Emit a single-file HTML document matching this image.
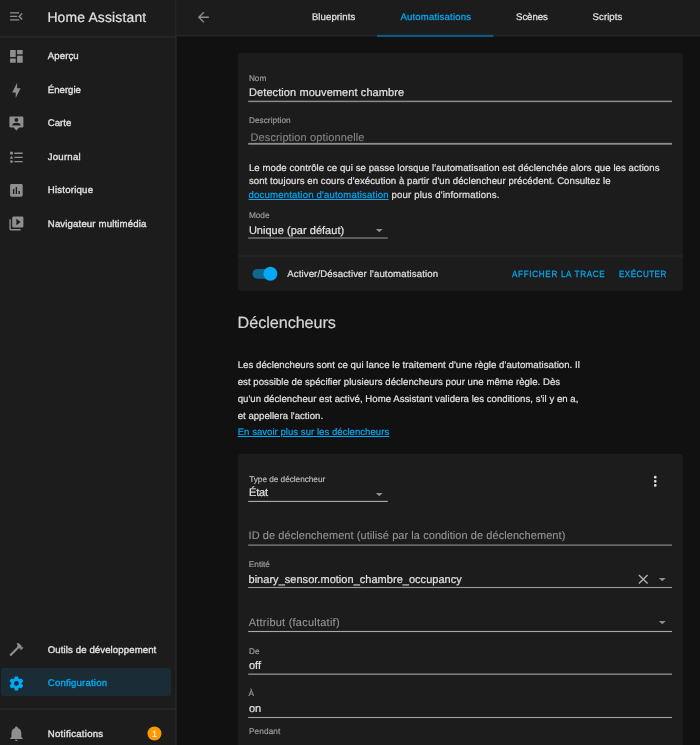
<!DOCTYPE html>
<html lang="fr">
<head>
<meta charset="utf-8">
<title>Home Assistant – Automatisations</title>
<style>
html,body{margin:0;padding:0;background:#111111;}
body{width:700px;height:745px;overflow:hidden;position:relative;font-family:"Liberation Sans", sans-serif;-webkit-font-smoothing:antialiased;}
.b{position:absolute;}
.ic{position:absolute;display:block;overflow:visible;}
.fl{left:0;top:0;width:700px;height:745px;}
.t{position:absolute;white-space:nowrap;margin:0;padding:0;line-height:1;font-weight:400;}
a{color:inherit;text-decoration:underline;text-underline-offset:1px;text-decoration-thickness:0.9px;}
#root{position:absolute;left:0;top:0;width:700px;height:745px;will-change:transform;text-rendering:geometricPrecision;}
</style>
</head>
<body>
<div id="root">
<nav aria-label="Barre latérale">
<div class="b" style="left:0px;top:0px;width:176px;height:745px;background:#1c1c1c;"></div>
<svg class="ic fl" viewBox="0 0 700 745"><rect x="175.4" y="0.00" width="1.20" height="745" fill="#2a2a2a"/></svg>
<svg class="ic fl" viewBox="0 0 700 745"><rect x="0" y="36.35" width="175.40" height="1.1" fill="#2e2e2e"/></svg>
<svg class="ic" style="left:8.10px;top:8.20px;width:16.8px;height:16.8px;" viewBox="0 0 24 24"><path fill="#8f8f8f" d="M21,15.61L19.59,17L14.58,12L19.59,7L21,8.39L17.44,12L21,15.61M3,6H16V8H3V6M3,13V11H13V13H3M3,18V16H16V18H3Z"/></svg>
<svg class="ic" style="left:8.20px;top:48.00px;width:16.8px;height:16.8px;" viewBox="0 0 24 24"><path fill="#8f8f8f" d="M13,3V9H21V3M13,21H21V11H13M3,21H11V15H3M3,13H11V3H3V13Z"/></svg>
<svg class="ic" style="left:8.20px;top:81.60px;width:16.8px;height:16.8px;" viewBox="0 0 24 24"><path fill="#8f8f8f" d="M11,15H6L13,1V9H18L11,23V15Z"/></svg>
<svg class="ic" style="left:8.20px;top:115.40px;width:16.8px;height:16.8px;" viewBox="0 0 24 24"><path fill="#8f8f8f" d="M20,2H4A2,2 0 0,0 2,4V16A2,2 0 0,0 4,18H8L12,22L16,18H20A2,2 0 0,0 22,16V4A2,2 0 0,0 20,2M12,4.3C13.5,4.3 14.7,5.5 14.7,7C14.7,8.5 13.5,9.7 12,9.7C10.5,9.7 9.3,8.5 9.3,7C9.3,5.5 10.5,4.3 12,4.3M18,15H6V14.1C6,12.1 10,11 12,11C14,11 18,12.1 18,14.1V15Z"/></svg>
<svg class="ic" style="left:8.20px;top:148.90px;width:16.8px;height:16.8px;" viewBox="0 0 24 24"><path fill="#8f8f8f" d="M5,9.5L7.5,14H2.5L5,9.5M3,4H7V8H3V4M5,20A2,2 0 0,0 7,18A2,2 0 0,0 5,16A2,2 0 0,0 3,18A2,2 0 0,0 5,20M9,5V7H21V5H9M9,19H21V17H9V19M9,13H21V11H9V13Z"/></svg>
<svg class="ic" style="left:8.20px;top:181.70px;width:16.8px;height:16.8px;" viewBox="0 0 24 24"><path fill="#8f8f8f" d="M17,17H15V13H17M13,17H11V7H13M9,17H7V10H9M19,3H5C3.89,3 3,3.89 3,5V19A2,2 0 0,0 5,21H19A2,2 0 0,0 21,19V5C21,3.89 20.1,3 19,3Z"/></svg>
<svg class="ic" style="left:8.20px;top:215.00px;width:16.8px;height:16.8px;" viewBox="0 0 24 24"><path fill="#8f8f8f" d="M4,6H2V20A2,2 0 0,0 4,22H18V20H4V6M20,2H8A2,2 0 0,0 6,4V16A2,2 0 0,0 8,18H20A2,2 0 0,0 22,16V4A2,2 0 0,0 20,2M12,14.5V5.5L18,10L12,14.5Z"/></svg>
<svg class="ic" style="left:8.20px;top:641.00px;width:16.8px;height:16.8px;" viewBox="0 0 24 24"><path fill="#8f8f8f" d="M2,19.63L13.43,8.2L12.72,7.5L14.14,6.07L12,3.89C13.2,2.7 15.09,2.7 16.27,3.89L19.87,7.5L18.45,8.91H21.29L22,9.62L18.45,13.21L17.74,12.5V9.62L16.27,11.04L15.56,10.33L4.13,21.76L2,19.63Z"/></svg>
<div class="b" style="left:1px;top:668px;width:170px;height:28px;background:#1a2c35;border-radius:3px;"></div>
<svg class="ic" style="left:8.20px;top:674.60px;width:16.8px;height:16.8px;" viewBox="0 0 24 24"><path fill="#03a9f4" d="M12,15.5A3.5,3.5 0 0,1 8.5,12A3.5,3.5 0 0,1 12,8.5A3.5,3.5 0 0,1 15.5,12A3.5,3.5 0 0,1 12,15.5M19.43,12.97C19.47,12.65 19.5,12.33 19.5,12C19.5,11.67 19.47,11.34 19.43,11L21.54,9.37C21.73,9.22 21.78,8.95 21.66,8.73L19.66,5.27C19.54,5.05 19.27,4.96 19.05,5.05L16.56,6.05C16.04,5.66 15.5,5.32 14.87,5.07L14.5,2.42C14.46,2.18 14.25,2 14,2H10C9.75,2 9.54,2.18 9.5,2.42L9.13,5.07C8.5,5.32 7.96,5.66 7.44,6.05L4.95,5.05C4.73,4.96 4.46,5.05 4.34,5.27L2.34,8.73C2.21,8.95 2.27,9.22 2.46,9.37L4.57,11C4.53,11.34 4.5,11.67 4.5,12C4.5,12.33 4.53,12.65 4.57,12.97L2.46,14.63C2.27,14.78 2.21,15.05 2.34,15.27L4.34,18.73C4.46,18.95 4.73,19.03 4.95,18.95L7.44,17.94C7.96,18.34 8.5,18.68 9.13,18.93L9.5,21.58C9.54,21.82 9.75,22 10,22H14C14.25,22 14.46,21.82 14.5,21.58L14.87,18.93C15.5,18.67 16.04,18.34 16.56,17.94L19.05,18.95C19.27,19.03 19.54,18.95 19.66,18.73L21.66,15.27C21.78,15.05 21.73,14.78 21.54,14.63L19.43,12.97Z"/></svg>
<svg class="ic fl" viewBox="0 0 700 745"><rect x="0" y="708.45" width="175.40" height="1.1" fill="#2e2e2e"/></svg>
<svg class="ic" style="left:8.30px;top:725.00px;width:16.8px;height:16.8px;" viewBox="0 0 24 24"><path fill="#8f8f8f" d="M21,19V20H3V19L5,17V11C5,7.9 7.03,5.17 10,4.29C10,4.19 10,4.1 10,4A2,2 0 0,1 12,2A2,2 0 0,1 14,4C14,4.1 14,4.19 14,4.29C16.97,5.17 19,7.9 19,11V17L21,19M14,21A2,2 0 0,1 12,23A2,2 0 0,1 10,21"/></svg>
<svg class="ic fl" viewBox="0 0 700 745"><circle cx="154.45" cy="733.55" r="7.0" fill="#ff9800"/></svg>
<div class="t" id="title" style="left:47.40px;top:11.01px;font-size:13.9px;color:#e1e1e1;letter-spacing:0.177px;-webkit-text-stroke:0.2px #e1e1e1;">Home Assistant</div>
<div class="t" id="sb0" style="left:47.80px;top:52.02px;font-size:9.6px;color:#e1e1e1;letter-spacing:0.099px;-webkit-text-stroke:0.35px #e1e1e1;">Aperçu</div>
<div class="t" id="sb1" style="left:47.80px;top:86.01px;font-size:9.6px;color:#e1e1e1;letter-spacing:0.003px;-webkit-text-stroke:0.35px #e1e1e1;">Énergie</div>
<div class="t" id="sb2" style="left:47.80px;top:119.01px;font-size:9.6px;color:#e1e1e1;letter-spacing:0.006px;-webkit-text-stroke:0.35px #e1e1e1;">Carte</div>
<div class="t" id="sb3" style="left:47.80px;top:153.02px;font-size:9.6px;color:#e1e1e1;letter-spacing:0.219px;-webkit-text-stroke:0.35px #e1e1e1;">Journal</div>
<div class="t" id="sb4" style="left:47.80px;top:186.01px;font-size:9.6px;color:#e1e1e1;letter-spacing:0.220px;-webkit-text-stroke:0.35px #e1e1e1;">Historique</div>
<div class="t" id="sb5" style="left:47.80px;top:220.01px;font-size:9.6px;color:#e1e1e1;letter-spacing:0.150px;-webkit-text-stroke:0.35px #e1e1e1;">Navigateur multimédia</div>
<div class="t" id="sbdev" style="left:47.80px;top:646.02px;font-size:9.6px;color:#e1e1e1;letter-spacing:0.107px;-webkit-text-stroke:0.35px #e1e1e1;">Outils de développement</div>
<div class="t" id="sbcfg" style="left:47.80px;top:679.02px;font-size:9.6px;color:#03a9f4;letter-spacing:0.179px;-webkit-text-stroke:0.35px #03a9f4;">Configuration</div>
<div class="t" id="sbnot" style="left:47.80px;top:730.02px;font-size:9.6px;color:#e1e1e1;letter-spacing:0.256px;-webkit-text-stroke:0.35px #e1e1e1;">Notifications</div>
<div class="t" id="badge" style="left:151.90px;top:730.01px;font-size:9.0px;color:#fff3e0;-webkit-text-stroke:0.15px #fff3e0;">1</div>
</nav>
<header aria-label="Onglets">
<div class="b" style="left:177px;top:0px;width:523px;height:35px;background:#1c1c1c;"></div>
<svg class="ic fl" viewBox="0 0 700 745"><rect x="176.6" y="35.20" width="523.40" height="1.2" fill="#2a2a2a"/></svg>
<svg class="ic fl" viewBox="0 0 700 745"><rect x="377.1" y="34.80" width="116.30" height="2.2" fill="#0f5a7e"/></svg>
<svg class="ic" style="left:195.10px;top:8.60px;width:16.6px;height:16.6px;" viewBox="0 0 24 24"><path fill="#8f8f8f" d="M20,11V13H8L13.5,18.5L12.08,19.92L4.16,12L12.08,4.08L13.5,5.5L8,11H20Z"/></svg>
<div class="t" id="tab0" style="left:311.90px;top:13.01px;font-size:9.6px;color:#e1e1e1;letter-spacing:0.083px;-webkit-text-stroke:0.25px #e1e1e1;">Blueprints</div>
<div class="t" id="tab1" style="left:400.40px;top:13.01px;font-size:9.6px;color:#03a9f4;letter-spacing:0.169px;-webkit-text-stroke:0.25px #03a9f4;">Automatisations</div>
<div class="t" id="tab2" style="left:516.10px;top:13.01px;font-size:9.6px;color:#e1e1e1;letter-spacing:-0.083px;-webkit-text-stroke:0.25px #e1e1e1;">Scènes</div>
<div class="t" id="tab3" style="left:592.60px;top:13.01px;font-size:9.6px;color:#e1e1e1;letter-spacing:0.053px;-webkit-text-stroke:0.25px #e1e1e1;">Scripts</div>
</header>
<main aria-label="Automatisation">
<svg class="ic fl" viewBox="0 0 700 745"><rect x="237.9" y="52.7" width="444.90" height="238.00" rx="3" fill="#1c1c1c"/></svg>
<svg class="ic fl" viewBox="0 0 700 745"><rect x="248.2" y="100.65" width="423.80" height="1.5" fill="#8a8a8a"/></svg>
<svg class="ic fl" viewBox="0 0 700 745"><rect x="248.2" y="142.90" width="423.80" height="1.8" fill="#8e8e8e"/></svg>
<svg class="ic" style="left:371.15px;top:222.35px;width:16.5px;height:16.5px;" viewBox="0 0 24 24"><path fill="#8f8f8f" d="M7,10L12,15L17,10H7Z"/></svg>
<svg class="ic fl" viewBox="0 0 700 745"><rect x="248.2" y="237.20" width="139.60" height="1.6" fill="#6c6c6c"/></svg>
<svg class="ic fl" viewBox="0 0 700 745"><rect x="238" y="255.50" width="445.00" height="1.0" fill="#2a2a2a"/></svg>
<svg class="ic fl" viewBox="0 0 700 745"><rect x="252.5" y="268.9" width="24.50" height="9.90" rx="4.95" fill="#0e6891"/></svg>
<svg class="ic fl" viewBox="0 0 700 745"><circle cx="270.4" cy="273.8" r="7.0" fill="#03a9f4"/></svg>
<svg class="ic fl" viewBox="0 0 700 745"><rect x="237.9" y="454.1" width="444.90" height="305.90" rx="3" fill="#1c1c1c"/></svg>
<svg class="ic" style="left:371.15px;top:485.95px;width:16.5px;height:16.5px;" viewBox="0 0 24 24"><path fill="#8f8f8f" d="M7,10L12,15L17,10H7Z"/></svg>
<svg class="ic fl" viewBox="0 0 700 745"><rect x="248.2" y="500.85" width="139.60" height="1.1" fill="#b0b0b0"/></svg>
<svg class="ic" style="left:647.45px;top:473.25px;width:16.5px;height:16.5px;" viewBox="0 0 24 24"><path fill="#e1e1e1" d="M12,16A2,2 0 0,1 14,18A2,2 0 0,1 12,20A2,2 0 0,1 10,18A2,2 0 0,1 12,16M12,10A2,2 0 0,1 14,12A2,2 0 0,1 12,14A2,2 0 0,1 10,12A2,2 0 0,1 12,10M12,4A2,2 0 0,1 14,6A2,2 0 0,1 12,8A2,2 0 0,1 10,6A2,2 0 0,1 12,4Z"/></svg>
<svg class="ic fl" viewBox="0 0 700 745"><rect x="248.2" y="544.40" width="423.80" height="1.4" fill="#7a7a7a"/></svg>
<svg class="ic" style="left:635.25px;top:570.75px;width:16.5px;height:16.5px;" viewBox="0 0 24 24"><path fill="#b0b0b0" d="M19,6.41L17.59,5L12,10.59L6.41,5L5,6.41L10.59,12L5,17.59L6.41,19L12,13.41L17.59,19L19,17.59L13.41,12L19,6.41Z"/></svg>
<svg class="ic" style="left:654.45px;top:570.75px;width:16.5px;height:16.5px;" viewBox="0 0 24 24"><path fill="#8f8f8f" d="M7,10L12,15L17,10H7Z"/></svg>
<svg class="ic fl" viewBox="0 0 700 745"><rect x="248.2" y="586.95" width="423.80" height="1.1" fill="#9a9a9a"/></svg>
<svg class="ic" style="left:654.45px;top:613.75px;width:16.5px;height:16.5px;" viewBox="0 0 24 24"><path fill="#8f8f8f" d="M7,10L12,15L17,10H7Z"/></svg>
<svg class="ic fl" viewBox="0 0 700 745"><rect x="248.2" y="630.95" width="423.80" height="1.1" fill="#a8a8a8"/></svg>
<svg class="ic fl" viewBox="0 0 700 745"><rect x="248.2" y="673.50" width="423.80" height="1.4" fill="#8a8a8a"/></svg>
<svg class="ic fl" viewBox="0 0 700 745"><rect x="248.2" y="716.95" width="423.80" height="1.1" fill="#a0a0a0"/></svg>
<div class="t" id="l_nom" style="left:248.90px;top:75.00px;font-size:8.25px;color:#9a9a9a;-webkit-text-stroke:0.2px #9a9a9a;">Nom</div>
<div class="t" id="v_nom" style="left:249.00px;top:88.01px;font-size:11px;color:#e1e1e1;letter-spacing:0.087px;-webkit-text-stroke:0.2px #e1e1e1;">Detection mouvement chambre</div>
<div class="t" id="l_desc" style="left:248.90px;top:117.00px;font-size:8.25px;color:#9a9a9a;letter-spacing:0.047px;-webkit-text-stroke:0.2px #9a9a9a;">Description</div>
<div class="t" id="v_desc" style="left:250.50px;top:133.00px;font-size:11px;color:#858585;letter-spacing:0.118px;-webkit-text-stroke:0.1px #858585;">Description optionnelle</div>
<div class="t" id="p1a" style="left:248.90px;top:164.01px;font-size:9.6px;color:#e1e1e1;letter-spacing:0.071px;-webkit-text-stroke:0.2px #e1e1e1;">Le mode contrôle ce qui se passe lorsque l'automatisation est déclenchée alors que les actions</div>
<div class="t" id="p1b" style="left:248.90px;top:177.01px;font-size:9.6px;color:#e1e1e1;letter-spacing:0.060px;-webkit-text-stroke:0.2px #e1e1e1;">sont toujours en cours d'exécution à partir d'un déclencheur précédent. Consultez le</div>
<div class="t" id="p1c" style="left:248.60px;top:191.01px;font-size:9.6px;color:#03a9f4;letter-spacing:0.164px;-webkit-text-stroke:0.2px #03a9f4;"><a>documentation d'automatisation</a></div>
<div class="t" id="p1d" style="left:391.60px;top:191.01px;font-size:9.6px;color:#e1e1e1;letter-spacing:0.147px;-webkit-text-stroke:0.2px #e1e1e1;">pour plus d'informations.</div>
<div class="t" id="l_mode" style="left:248.90px;top:212.00px;font-size:8.25px;color:#9a9a9a;-webkit-text-stroke:0.2px #9a9a9a;">Mode</div>
<div class="t" id="v_mode" style="left:248.90px;top:226.00px;font-size:11px;color:#e1e1e1;letter-spacing:0.027px;-webkit-text-stroke:0.2px #e1e1e1;">Unique (par défaut)</div>
<div class="t" id="sw" style="left:287.20px;top:270.00px;font-size:9.6px;color:#e1e1e1;letter-spacing:0.133px;-webkit-text-stroke:0.2px #e1e1e1;">Activer/Désactiver l'automatisation</div>
<div class="t" id="btn1" style="left:512.00px;top:270.01px;font-size:9.0px;color:#03a9f4;letter-spacing:0.760px;-webkit-text-stroke:0.25px #03a9f4;transform:scaleX(0.9);transform-origin:0 0;">AFFICHER LA TRACE</div>
<div class="t" id="btn2" style="left:618.70px;top:270.01px;font-size:9.0px;color:#03a9f4;letter-spacing:0.512px;-webkit-text-stroke:0.25px #03a9f4;transform:scaleX(0.9);transform-origin:0 0;">EXÉCUTER</div>
<div class="t" id="h_trig" style="left:237.60px;top:315.01px;font-size:16.2px;color:#d6d6d6;letter-spacing:-0.057px;-webkit-text-stroke:0.2px #d6d6d6;">Déclencheurs</div>
<div class="t" id="p2a" style="left:237.70px;top:361.01px;font-size:9.6px;color:#e1e1e1;letter-spacing:0.059px;-webkit-text-stroke:0.2px #e1e1e1;">Les déclencheurs sont ce qui lance le traitement d'une règle d'automatisation. Il</div>
<div class="t" id="p2b" style="left:237.70px;top:378.01px;font-size:9.6px;color:#e1e1e1;letter-spacing:0.041px;-webkit-text-stroke:0.2px #e1e1e1;">est possible de spécifier plusieurs déclencheurs pour une même règle. Dès</div>
<div class="t" id="p2c" style="left:237.70px;top:395.00px;font-size:9.6px;color:#e1e1e1;letter-spacing:0.033px;-webkit-text-stroke:0.2px #e1e1e1;">qu'un déclencheur est activé, Home Assistant validera les conditions, s'il y en a,</div>
<div class="t" id="p2d" style="left:237.70px;top:412.01px;font-size:9.6px;color:#e1e1e1;letter-spacing:0.016px;-webkit-text-stroke:0.2px #e1e1e1;">et appellera l'action.</div>
<div class="t" id="p2e" style="left:237.70px;top:428.01px;font-size:9.6px;color:#03a9f4;letter-spacing:0.017px;-webkit-text-stroke:0.2px #03a9f4;"><a>En savoir plus sur les déclencheurs</a></div>
<div class="t" id="l_type" style="left:249.20px;top:476.00px;font-size:8.25px;color:#b8b8b8;letter-spacing:-0.032px;-webkit-text-stroke:0.2px #b8b8b8;">Type de déclencheur</div>
<div class="t" id="v_type" style="left:249.00px;top:488.00px;font-size:11px;color:#e1e1e1;letter-spacing:-0.145px;-webkit-text-stroke:0.2px #e1e1e1;">État</div>
<div class="t" id="v_id" style="left:248.60px;top:531.00px;font-size:11px;color:#959595;letter-spacing:0.059px;-webkit-text-stroke:0.1px #959595;">ID de déclenchement (utilisé par la condition de déclenchement)</div>
<div class="t" id="l_ent" style="left:248.80px;top:561.00px;font-size:8.25px;color:#9a9a9a;-webkit-text-stroke:0.2px #9a9a9a;">Entité</div>
<div class="t" id="v_ent" style="left:248.50px;top:575.00px;font-size:11px;color:#e1e1e1;letter-spacing:0.029px;-webkit-text-stroke:0.2px #e1e1e1;">binary_sensor.motion_chambre_occupancy</div>
<div class="t" id="v_attr" style="left:248.70px;top:618.00px;font-size:11px;color:#959595;letter-spacing:0.233px;-webkit-text-stroke:0.1px #959595;">Attribut (facultatif)</div>
<div class="t" id="l_de" style="left:249.00px;top:648.00px;font-size:8.25px;color:#9a9a9a;-webkit-text-stroke:0.2px #9a9a9a;">De</div>
<div class="t" id="v_de" style="left:249.00px;top:661.01px;font-size:11px;color:#e1e1e1;-webkit-text-stroke:0.2px #e1e1e1;">off</div>
<div class="t" id="l_a" style="left:248.60px;top:690.01px;font-size:8.25px;color:#9a9a9a;-webkit-text-stroke:0.2px #9a9a9a;">À</div>
<div class="t" id="v_a" style="left:249.00px;top:704.00px;font-size:11px;color:#e1e1e1;-webkit-text-stroke:0.2px #e1e1e1;">on</div>
<div class="t" id="l_pend" style="left:249.00px;top:728.00px;font-size:8.25px;color:#9a9a9a;letter-spacing:0.093px;-webkit-text-stroke:0.2px #9a9a9a;">Pendant</div>
</main>
</div>
</body>
</html>
